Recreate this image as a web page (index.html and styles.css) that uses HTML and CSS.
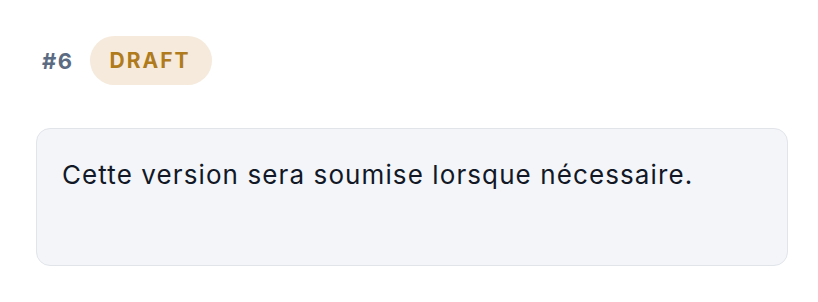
FILE: index.html
```html
<!DOCTYPE html>
<html lang="fr">
<head>
    <meta charset="UTF-8">
    <meta name="viewport" content="width=device-width, initial-scale=1.0">
    <title>Version #6</title>
    <link rel="stylesheet" href="styles.css">
</head>
<body>
<div class="page">
    <div class="header">
        <span class="number">#6</span>
        <span class="badge">DRAFT</span>
    </div>
    <div class="card">
        <p class="message">Cette version sera soumise lorsque nécessaire.</p>
    </div>
</div>
</body>
</html>
```

FILE: styles.css
```css
body {
    margin: 0;
    padding: 0;
    font-family: Inter, "Noto Sans", sans-serif;
    background-color: #ffffff;
}

.page {
    padding: 36px 30px 0 36px;
}

.header {
    display: flex;
    align-items: center;
    gap: 16px;
    padding-left: 6px;
    height: 49px;
}

.number {
    font-size: 22px;
    font-weight: 700;
    letter-spacing: 1.5px;
    color: #5b6b82;
}

.badge {
    display: inline-flex;
    align-items: center;
    height: 49px;
    padding: 0 21px 0 20px;
    border-radius: 999px;
    background-color: #f5eadb;
    color: #b07b1c;
    font-size: 21px;
    font-weight: 700;
    letter-spacing: 2px;
    box-sizing: border-box;
}

.card {
    margin-top: 43px;
    height: 138px;
    box-sizing: border-box;
    background-color: #f3f5f9;
    border: 1px solid #e1e4e9;
    border-radius: 14px;
    padding: 29px 25px;
}

.message {
    margin: 0;
    font-size: 26px;
    line-height: 34px;
    letter-spacing: 1.1px;
    color: #121826;
}
```
